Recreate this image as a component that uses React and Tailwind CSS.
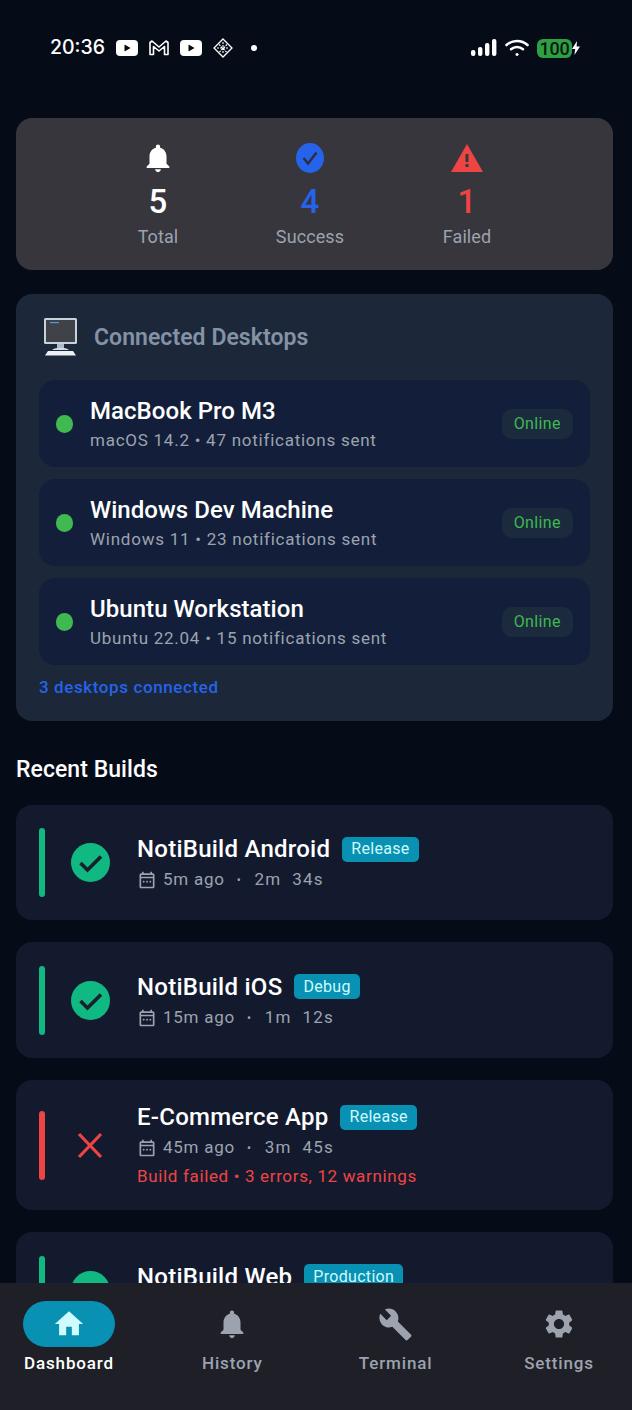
import React from "react";

const Yt = () => (
  <svg width="22" height="16" viewBox="0 0 22 16"><rect x="0" y="0" width="22" height="16" rx="4" fill="#fff" /><path d="M8.5 4.6 L14.5 8 L8.5 11.4 Z" fill="#050a14" /></svg>
);
const Gmail = () => (
  <svg width="20" height="16" viewBox="0 0 20 16" fill="none" stroke="#fff" strokeWidth="1.6" strokeLinejoin="round"><path d="M1 14.5 V2.5 L3 1 L10 7 L17 1 L19 2.5 V14.5 H15.5 V6.5 L10 11 L4.5 6.5 V14.5 Z" /></svg>
);
const Diamond = () => (
  <svg width="20" height="20" viewBox="0 0 20 20" fill="none" stroke="#fff"><path d="M10 1 L19 10 L10 19 L1 10 Z" strokeWidth="1.3" /><path d="M6 6.5 L13.5 14 M14 6.5 L6.5 14 M10 4 L10 16 M4 10 L16 10" strokeWidth="1.1" strokeDasharray="2 1" /></svg>
);
const Signal = () => (
  <svg width="26" height="18" viewBox="0 0 26 18" fill="#fff"><rect x="0" y="11" width="4.4" height="6" rx="2" /><rect x="7" y="8" width="4.4" height="9" rx="2" /><rect x="14" y="4" width="4.4" height="13" rx="2" /><rect x="21" y="0" width="4.4" height="17" rx="2" /></svg>
);
const Wifi = () => (
  <svg width="24" height="18" viewBox="0 0 24 18" fill="none" stroke="#fff" strokeWidth="2.6" strokeLinecap="round"><path d="M1.5 6 C7.5 0.6 16.5 0.6 22.5 6" /><path d="M6 10.2 C9.5 7.2 14.5 7.2 18 10.2" /><circle cx="12" cy="15.5" r="1.2" fill="#fff" strokeWidth="0.6" /></svg>
);
const BellIcon = ({ fill, size = 26 }) => (
  <svg width={size} height={size} viewBox="0 0 24 24" fill={fill}><path d="M12 22c1.1 0 2-.9 2-2h-4c0 1.1.9 2 2 2zm6-6v-5c0-3.07-1.63-5.64-4.5-6.32V4c0-.83-.67-1.5-1.5-1.5s-1.5.67-1.5 1.5v.68C7.64 5.36 6 7.92 6 11v5l-2 2v1h16v-1l-2-2z" /></svg>
);
const Calendar = () => (
  <svg width="20" height="20" viewBox="0 0 24 24" fill="#9ca3af"><path d="M19 4h-1V2h-2v2H8V2H6v2H5c-1.1 0-2 .9-2 2v14c0 1.1.9 2 2 2h14c1.1 0 2-.9 2-2V6c0-1.1-.9-2-2-2zm0 16H5V10h14v10zm0-12H5V6h14v2z" /><rect x="7" y="13" width="2" height="2" /><rect x="11" y="13" width="2" height="2" /><rect x="15" y="13" width="2" height="2" /></svg>
);
const CheckCircle = () => (
  <svg width="39" height="39" viewBox="0 0 39 39"><circle cx="19.5" cy="19.5" r="19.5" fill="#10b981" /><path d="M9.5 20 L16.5 27 L30 13.5" fill="none" stroke="#1a1f2e" strokeWidth="3.6" /></svg>
);
const Cross = () => (
  <svg width="39" height="39" viewBox="0 0 39 39"><path d="M8 8 L30 31 M30 8 L8 31" fill="none" stroke="#ef4444" strokeWidth="3.2" /></svg>
);
const Monitor = () => (
  <svg width="36" height="40" viewBox="0 0 36 40">
    <rect x="1" y="1" width="33" height="26" rx="1.5" fill="#c9d2da" />
    <rect x="3" y="3" width="29" height="22" fill="#3f4249" />
    <rect x="7" y="5" width="9" height="1.2" fill="#4b9bd6" />
    <rect x="14" y="27" width="7" height="4" fill="#a9bccb" />
    <path d="M9 33 C12 30 23 30 26 33 Z" fill="#d4dde4" />
    <path d="M5 34 H30 L33 38.5 H2 Z" fill="#eef1f4" />
  </svg>
);

const desktops = [
  ["MacBook Pro M3", "macOS 14.2 • 47 notifications sent"],
  ["Windows Dev Machine", "Windows 11 • 23 notifications sent"],
  ["Ubuntu Workstation", "Ubuntu 22.04 • 15 notifications sent"],
];

const Stat = ({ icon, value, label, color, className }) => (
  <div className={`flex flex-col items-center ${className}`}>
    <div className="h-[30px] flex items-center justify-center">{icon}</div>
    <div className={`text-[33px] leading-[42px] mt-[8px] font-medium ${color}`}>{value}</div>
    <div className="text-[18px] leading-[24px] mt-[2px] tracking-[0.1px] text-[#9ca3af]">{label}</div>
  </div>
);

const DesktopRow = ({ name, sub }) => (
  <div className="h-[87px] rounded-[16px] bg-[#131f3a] flex items-center pl-[17px] pr-[17px]">
    <div className="w-[17px] h-[18px] rounded-full bg-[#3fb950] shrink-0" />
    <div className="ml-[17px] flex-1 min-w-0">
      <div className="text-[24px] leading-[30px] font-medium tracking-[0.05px] text-white">{name}</div>
      <div className="text-[17px] leading-[24px] mt-[2px] tracking-[0.75px] text-[#9ca3af]">{sub}</div>
    </div>
    <div className="h-[30px] px-[12px] rounded-[10px] bg-[#1c2a3e] flex items-center text-[16px] tracking-[0.4px] text-[#3fb950]">Online</div>
  </div>
);

const Build = ({ name, tag, when, dur, ok, err, height }) => (
  <div className={`${height} shrink-0 rounded-[16px] bg-[#141a2e] flex items-center pl-[23px]`}>
    <div className={`w-[6px] h-[69px] rounded-full ${ok ? "bg-[#10b981]" : "bg-[#ef4444]"}`} />
    <div className="ml-[26px] w-[39px] flex justify-center">{ok ? <CheckCircle /> : <Cross />}</div>
    <div className="ml-[27px] pt-[2px]">
      <div className="flex items-center h-[30px] mb-[3px]">
        <span className="text-[24px] font-medium tracking-[0.25px] text-white">{name}</span>
        <span className="ml-[12px] h-[25px] px-[9px] rounded-[5px] bg-[#0891b2] flex items-center text-[16px] tracking-[0.3px] text-[#cffafe]">{tag}</span>
      </div>
      <div className="flex items-center h-[26px] text-[17px] tracking-[0.75px] text-[#9ca3af]">
        <Calendar />
        <span className="ml-[6px]">{when}</span>
        <span className="ml-[12px] mr-[13px] text-[12px]">•</span>
        <span className="whitespace-pre tracking-[1.2px]">{dur}</span>
      </div>
      {err && <div className="mt-[3px] mb-[2px] text-[17px] leading-[24px] tracking-[0.65px] text-[#ef4444]">{err}</div>}
    </div>
  </div>
);

const NavItem = ({ icon, label, active }) => (
  <div className="flex flex-col items-center w-[92px]">
    <div className={`w-[92px] h-[46px] rounded-full flex items-center justify-center ${active ? "bg-[#0891b2]" : ""}`}>{icon}</div>
    <div className={`mt-[5px] text-[17px] leading-[22px] font-medium tracking-[0.85px] whitespace-nowrap ${active ? "text-white" : "text-[#9ca3af]"}`}>{label}</div>
  </div>
);

export default function App() {
  return (
    <div className="w-[632px] h-[1410px] bg-[#060b18] flex flex-col overflow-hidden" style={{ fontFamily: "Roboto, sans-serif" }}>
      <div className="h-[118px] shrink-0 flex items-start justify-between pl-[50px] pr-[52px] pt-[36px]">
        <div className="flex items-center gap-[11px] h-[24px]">
          <span className="text-[19.5px] font-medium tracking-[0px] text-white" style={{ fontFamily: "Inter, sans-serif" }}>20:36</span>
          <Yt /><Gmail /><Yt /><Diamond />
          <div className="ml-[7px] w-[6px] h-[6px] rounded-full bg-white" />
        </div>
        <div className="flex items-center h-[24px]">
          <Signal />
          <div className="ml-[8px]"><Wifi /></div>
          <div className="ml-[8px] w-[35px] h-[19px] rounded-[6px] bg-[#2ea043] flex items-center justify-center text-[18px] font-medium tracking-[-0.3px] text-[#0b1a10]">100</div>
          <svg width="8" height="14" viewBox="0 0 8 14" fill="#fff"><path d="M5 0 L0 8 H3.2 L2.4 14 L8 5.6 H4.6 Z" /></svg>
        </div>
      </div>

      <div className="flex-1 min-h-0 overflow-hidden pl-[16px] pr-[19px] flex flex-col">
        <div className="h-[152px] shrink-0 rounded-[16px] bg-[#37363d] pt-[25px] flex">
          <Stat className="w-[142px] ml-[71px]" icon={<BellIcon fill="#fff" size={34} />} value="5" label="Total" color="text-white" />
          <Stat className="w-[160px] ml-[1px]" icon={<svg width="28" height="30" viewBox="0 0 28 30"><ellipse cx="14" cy="15" rx="14" ry="15" fill="#2563eb" /><path d="M7.5 15 L12 20.5 L20.5 9.5" fill="none" stroke="#2d2f3c" strokeWidth="2.4" /></svg>} value="4" label="Success" color="text-[#2563eb]" />
          <Stat className="w-[154px]" icon={<svg width="32" height="28" viewBox="0 0 32 28"><path d="M16 0 L32 28 H0 Z" fill="#ef4444" /><rect x="14.5" y="10" width="3" height="8" fill="#37363d" /><rect x="14.5" y="20" width="3" height="3" fill="#37363d" /></svg>} value="1" label="Failed" color="text-[#ef4444]" />
        </div>

        <div className="h-[427px] shrink-0 mt-[24px] rounded-[16px] bg-[#1c2739] px-[23px] pt-[23px]">
          <div className="flex items-center h-[40px] pl-[4px]">
            <Monitor />
            <span className="ml-[15px] mt-[2px] text-[23px] font-semibold tracking-[0.05px] text-[#8492a6]">Connected Desktops</span>
          </div>
          <div className="mt-[23px] flex flex-col gap-[12px]">
            {desktops.map(([n, s]) => <DesktopRow key={n} name={n} sub={s} />)}
          </div>
          <div className="mt-[11px] text-[17px] leading-[22px] font-medium tracking-[0.6px] text-[#2563eb]">3 desktops connected</div>
        </div>

        <div className="mt-[34px] text-[23px] leading-[30px] font-medium tracking-[0.05px] text-white">Recent Builds</div>

        <div className="mt-[20px] flex flex-col gap-[22px]">
          <Build height="h-[115px]" ok name="NotiBuild Android" tag="Release" when="5m ago" dur="2m  34s" />
          <Build height="h-[116px]" ok name="NotiBuild iOS" tag="Debug" when="15m ago" dur="1m  12s" />
          <Build height="h-[130px]" name="E-Commerce App" tag="Release" when="45m ago" dur="3m  45s" err="Build failed • 3 errors, 12 warnings" />
          <Build height="h-[116px]" ok name="NotiBuild Web" tag="Production" when="1h ago" dur="4m  02s" />
        </div>
      </div>

      <div className="h-[127px] shrink-0 bg-[#1f1f27] pt-[18px] pl-[23px] pr-[27px] flex justify-between items-start">
        <NavItem active label="Dashboard" icon={<svg width="34" height="34" viewBox="0 0 24 24" fill="#cffafe"><path d="M10 20v-6h4v6h5v-8h3L12 3 2 12h3v8z" /></svg>} />
        <NavItem label="History" icon={<BellIcon fill="#9ca3af" size={34} />} />
        <NavItem label="Terminal" icon={<svg width="35" height="35" viewBox="0 0 24 24" fill="#9ca3af"><path d="M22.7 19l-9.1-9.1c.9-2.3.4-5-1.5-6.9-2-2-5-2.4-7.4-1.3L9 6 6 9 1.6 4.7C.4 7.1.9 10.1 2.9 12.1c1.9 1.9 4.6 2.4 6.9 1.5l9.1 9.1c.4.4 1 .4 1.4 0l2.3-2.3c.5-.4.5-1.1.1-1.4z" /></svg>} />
        <NavItem label="Settings" icon={<svg width="34" height="34" viewBox="0 0 24 24" fill="#9ca3af"><path d="M19.14 12.94c.04-.3.06-.61.06-.94 0-.32-.02-.64-.07-.94l2.03-1.58c.18-.14.23-.41.12-.61l-1.92-3.32c-.12-.22-.37-.29-.59-.22l-2.39.96c-.5-.38-1.03-.7-1.62-.94l-.36-2.54c-.04-.24-.24-.41-.48-.41h-3.84c-.24 0-.43.17-.47.41l-.36 2.54c-.59.24-1.13.57-1.62.94l-2.39-.96c-.22-.08-.47 0-.59.22L2.74 8.87c-.12.21-.08.47.12.61l2.03 1.58c-.05.3-.09.63-.09.94s.02.64.07.94l-2.03 1.58c-.18.14-.23.41-.12.61l1.92 3.32c.12.22.37.29.59.22l2.39-.96c.5.38 1.03.7 1.62.94l.36 2.54c.05.24.24.41.48.41h3.84c.24 0 .44-.17.47-.41l.36-2.54c.59-.24 1.13-.56 1.62-.94l2.39.96c.22.08.47 0 .59-.22l1.92-3.32c.12-.22.07-.47-.12-.61l-2.01-1.58zM12 15.6c-1.98 0-3.6-1.62-3.6-3.6s1.62-3.6 3.6-3.6 3.6 1.62 3.6 3.6-1.62 3.6-3.6 3.6z" /></svg>} />
      </div>
    </div>
  );
}
